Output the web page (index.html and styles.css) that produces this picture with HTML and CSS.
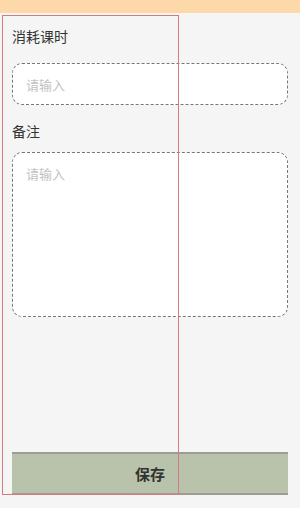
FILE: index.html
```html
<!DOCTYPE html>
<html lang="zh">
<head>
    <meta charset="UTF-8">
    <meta name="viewport" content="width=device-width, initial-scale=1.0">
    <title>消耗课时</title>
    <link rel="stylesheet" href="styles.css">
</head>
<body>
    <div class="top-bar"></div>
    <div class="page">
        <div class="form">
            <label class="field-label" for="hours">消耗课时</label>
            <input type="text" id="hours" class="field-input" placeholder="请输入">

            <label class="field-label label-note" for="note">备注</label>
            <textarea id="note" class="field-area" placeholder="请输入"></textarea>
        </div>
        <button class="save-btn">保存</button>
        <div class="highlight"></div>
    </div>
</body>
</html>
```

FILE: styles.css
```css
body {
    margin: 0;
    padding: 0;
    background-color: #f5f5f5;
    font-family: "Noto Sans CJK SC", "Noto Sans", sans-serif;
    color: #333;
    width: 300px;
    height: 508px;
    overflow: hidden;
}
.top-bar {
    height: 13px;
    background-color: #fdd9aa;
}
.page {
    position: relative;
    height: 495px;
    display: flex;
    flex-direction: column;
}
.form {
    flex: 1;
    padding: 0 12px;
}
.field-label {
    display: block;
    font-size: 14px;
    line-height: 20px;
    margin-top: 13px;
    color: #333;
}
.label-note {
    margin-top: 16px;
}
.field-input, .field-area {
    display: block;
    width: 100%;
    box-sizing: border-box;
    border: 1px dashed #777;
    border-radius: 10px;
    background-color: #fff;
    font-family: "Noto Sans CJK SC", "Noto Sans", sans-serif;
    font-size: 13px;
    color: #333;
    padding: 0 13px;
    outline: none;
}
.field-input {
    height: 42px;
    margin-top: 17px;
}
.field-area {
    height: 165px;
    margin-top: 11px;
    padding-top: 11px;
    resize: none;
}
.field-input::placeholder, .field-area::placeholder {
    color: #c2c2c2;
}
.save-btn {
    margin: 0 12px 13px;
    height: 43px;
    background-color: #b9c3ab;
    border: none;
    border-top: 2px solid #9c9e96;
    border-bottom: 2px solid #9c9e96;
    font-family: "Noto Sans CJK SC", "Noto Sans", sans-serif;
    font-size: 15px;
    font-weight: bold;
    color: #333;
    cursor: pointer;
}
.highlight {
    position: absolute;
    left: 2px;
    top: 2px;
    width: 175px;
    height: 478px;
    border: 1.5px solid #d27c7c;
    pointer-events: none;
}
```
